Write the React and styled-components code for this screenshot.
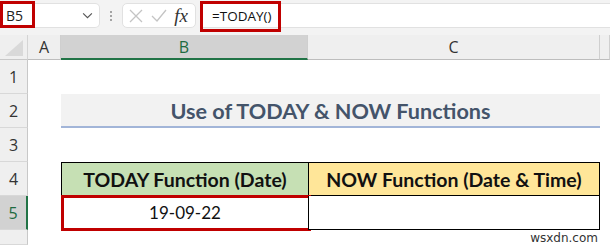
import React from 'react'
import styled, { createGlobalStyle } from 'styled-components'

const GlobalStyle = createGlobalStyle`
  html, body {
    margin: 0;
    padding: 0;
    background: #ffffff;
  }
  body {
    width: 610px;
    height: 245px;
    overflow: hidden;
    font-family: "Open Sans", "Noto Sans", sans-serif;
  }
`

function App() {
  const rows = [1, 2, 3, 4, 5]
  return (
    <Page>
      <GlobalStyle />
      <TopBar>
        <NameBox>
          <NameText>B5</NameText>
          <Chevron viewBox="0 0 12 8">
            <path d="M1 1.5 L6 6.5 L11 1.5" fill="none" stroke="#555" strokeWidth="1.3" />
          </Chevron>
          <Highlight w={35} h={27} />
        </NameBox>
        <Dots>
          <span /><span /><span />
        </Dots>
        <FxBox>
          <svg width="14" height="14" viewBox="0 0 14 14">
            <path d="M1 1 L13 13 M13 1 L1 13" stroke="#c4c4c4" strokeWidth="1.3" />
          </svg>
          <svg width="16" height="14" viewBox="0 0 16 14">
            <path d="M1 7 L6 12 L15 1" fill="none" stroke="#c4c4c4" strokeWidth="1.3" />
          </svg>
          <FxLabel>fx</FxLabel>
        </FxBox>
        <FormulaBar>
          <FormulaText>=TODAY()</FormulaText>
          <Highlight w={81} h={31} top={-3} left={0} />
        </FormulaBar>
      </TopBar>

      <Sheet>
        <Corner>
          <svg width="20" height="18" viewBox="0 0 20 18">
            <polygon points="19,1 19,17 1,17" fill="#d9d9d9" />
          </svg>
        </Corner>
        <ColHead>A</ColHead>
        <ColHead selected>B</ColHead>
        <ColHead>C</ColHead>
        <ColHead />

        {rows.map(r => (
          <React.Fragment key={r}>
            <RowHead selected={r === 5}>{r}</RowHead>
            <Cell />
            {r === 2 && <TitleCell>Use of TODAY &amp; NOW Functions</TitleCell>}
            {r === 4 && (
              <>
                <HeadCell fill="#c6e0b4">TODAY Function (Date)</HeadCell>
                <HeadCell fill="#ffe699" last>NOW Function (Date &amp; Time)</HeadCell>
              </>
            )}
            {r === 5 && (
              <>
                <DataCell>
                  19-09-22
                  <Selection />
                </DataCell>
                <DataCell last />
              </>
            )}
            {(r === 1 || r === 3) && (
              <>
                <Cell />
                <Cell />
              </>
            )}
            <Cell />
          </React.Fragment>
        ))}
        <RowHead />
        <Cell />
        <Cell />
        <Cell />
        <Cell />
      </Sheet>
      <Watermark>wsxdn.com</Watermark>
    </Page>
  )
}

export default App

const Page = styled.div`
  position: relative;
  width: 610px;
  height: 245px;
  overflow: hidden;
  background: #ffffff;
`

const TopBar = styled.div`
  height: 35px;
  background: #f3f3f3;
  display: flex;
  align-items: flex-start;
  box-sizing: border-box;
`

const NameBox = styled.div`
  position: relative;
  margin-top: 3px;
  width: 100px;
  height: 25px;
  box-sizing: border-box;
  background: #ffffff;
  border: 1px solid #e1e1e1;
  border-left: none;
  border-radius: 0 5px 5px 0;
  display: flex;
  align-items: center;
  justify-content: space-between;
  padding: 0 6px 0 6px;
`

const NameText = styled.span`
  font-size: 14px;
  color: #222;
  font-family: "Open Sans", sans-serif;
`

const Chevron = styled.svg`
  width: 11px;
  height: 7px;
`

const Highlight = styled.div`
  position: absolute;
  left: ${p => (p.left !== undefined ? p.left : 0)}px;
  top: ${p => (p.top !== undefined ? p.top : -3)}px;
  width: ${p => p.w}px;
  height: ${p => p.h}px;
  box-sizing: border-box;
  border: 3px solid #c00000;
  pointer-events: none;
`

const Dots = styled.div`
  width: 22px;
  height: 25px;
  margin-top: 3px;
  display: flex;
  flex-direction: column;
  align-items: center;
  justify-content: center;
  gap: 2px;

  span {
    width: 2px;
    height: 2px;
    background: #8a8a8a;
    border-radius: 50%;
  }
`

const FxBox = styled.div`
  margin-top: 3px;
  width: 74px;
  height: 25px;
  box-sizing: border-box;
  background: #ffffff;
  border: 1px solid #e1e1e1;
  border-radius: 5px;
  display: flex;
  align-items: center;
  justify-content: space-between;
  padding: 0 7px 0 6px;
`

const FxLabel = styled.span`
  font-family: "Liberation Serif", "DejaVu Serif", serif;
  font-style: italic;
  font-size: 19px;
  color: #333;
  line-height: 1;
`

const FormulaBar = styled.div`
  position: relative;
  flex: 1;
  margin-left: 4px;
  margin-top: 3px;
  height: 25px;
  box-sizing: border-box;
  background: #ffffff;
  border-top: 1px solid #e1e1e1;
  border-bottom: 1px solid #e1e1e1;
  display: flex;
  align-items: center;
  padding-left: 12px;
`

const FormulaText = styled.span`
  font-size: 13.5px;
  color: #111;
  font-family: "Open Sans", sans-serif;
`

const Sheet = styled.div`
  display: grid;
  grid-template-columns: 28px 33px 247px 292px 1fr;
  grid-template-rows: 25px 34px 34px 34px 34px 34px 1fr;
  height: 210px;
`

const Corner = styled.div`
  background: #efefef;
  border-right: 1px solid #d4d4d4;
  border-bottom: 1px solid #c8c8c8;
  box-sizing: border-box;
  display: flex;
  align-items: flex-end;
  justify-content: flex-end;
  padding: 0 3px 2px 0;
`

const ColHead = styled.div`
  background: ${p => (p.selected ? '#d2d2d2' : '#efefef')};
  color: ${p => (p.selected ? '#1e6b41' : '#333')};
  border-right: 1px solid #cfcfcf;
  border-bottom: ${p => (p.selected ? '2px solid #217346' : '1px solid #bdbdbd')};
  box-sizing: border-box;
  display: flex;
  align-items: center;
  justify-content: center;
  font-size: 16px;
  font-family: "Open Sans", sans-serif;
`

const RowHead = styled.div`
  background: ${p => (p.selected ? '#d2d2d2' : '#efefef')};
  color: ${p => (p.selected ? '#1e6b41' : '#333')};
  border-right: ${p => (p.selected ? '2px solid #217346' : '1px solid #c8c8c8')};
  border-bottom: 1px solid #d8d8d8;
  box-sizing: border-box;
  display: flex;
  align-items: center;
  justify-content: center;
  font-size: 16px;
  font-family: "Open Sans", sans-serif;
`

const Cell = styled.div`
  background: #ffffff;
`

const TitleCell = styled.div`
  grid-column: 3 / 5;
  background: #f2f2f2;
  border-bottom: 2px solid #a2b5d8;
  box-sizing: border-box;
  display: flex;
  align-items: center;
  justify-content: center;
  padding-top: 2px;
  font-family: Lato, "Open Sans", sans-serif;
  font-weight: 700;
  font-size: 21.6px;
  color: #44546a;
`

const HeadCell = styled.div`
  background: ${p => p.fill};
  border: 1px solid #000;
  border-right: ${p => (p.last ? '1px solid #000' : 'none')};
  box-sizing: border-box;
  display: flex;
  align-items: center;
  justify-content: center;
  font-family: Lato, "Open Sans", sans-serif;
  font-weight: 700;
  font-size: 19.5px;
  color: #111;
`

const DataCell = styled.div`
  position: relative;
  background: #ffffff;
  border-left: 1px solid #000;
  border-bottom: 1px solid #000;
  border-right: ${p => (p.last ? '1px solid #000' : 'none')};
  box-sizing: border-box;
  display: flex;
  align-items: center;
  justify-content: center;
  font-family: Lato, "Open Sans", sans-serif;
  font-size: 17px;
  color: #111;
`

const Selection = styled.div`
  position: absolute;
  left: -1px;
  top: -1px;
  right: -3px;
  bottom: -2px;
  border: 3px solid #c00000;
`

const Watermark = styled.div`
  position: absolute;
  right: 12px;
  bottom: 0px;
  font-family: "DejaVu Sans", sans-serif;
  font-size: 12px;
  color: #333;
  background: #fff;
  line-height: 14px;
`
